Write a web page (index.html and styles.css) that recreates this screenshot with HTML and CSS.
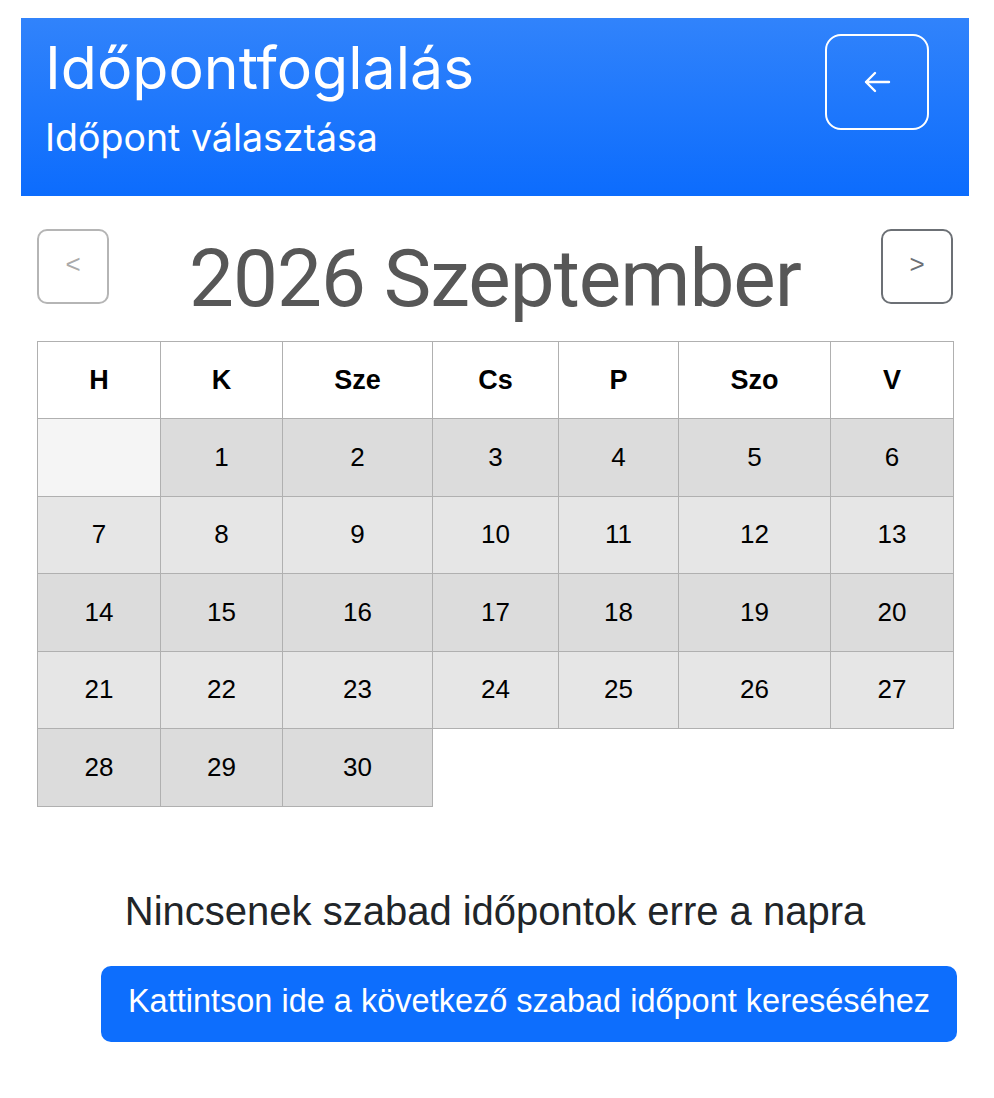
FILE: index.html
```html
<!DOCTYPE html>
<html lang="hu">
<head>
<meta charset="utf-8">
<title>Időpontfoglalás</title>
<link rel="stylesheet" href="styles.css">
</head>
<body>
<div class="page">
  <header class="top">
    <div class="titles">
      <h1 class="title">Időpontfoglalás</h1>
      <div class="subtitle">Időpont választása</div>
    </div>
    <button class="back" aria-label="Vissza">
      <svg width="30" height="24" viewBox="0 0 30 24" fill="none" stroke="#fff" stroke-width="2.4" stroke-linecap="round" stroke-linejoin="round"><path d="M27 12H4M13 3L4 12l9 9"/></svg>
    </button>
  </header>

  <section class="cal">
    <div class="nav">
      <button class="navbtn prev">&lt;</button>
      <div class="month">2026 Szeptember</div>
      <button class="navbtn next">&gt;</button>
    </div>
    <table class="grid">
      <colgroup>
        <col class="c1"><col class="c2"><col class="c3"><col class="c4"><col class="c5"><col class="c6"><col class="c7">
      </colgroup>
      <thead>
        <tr><th>H</th><th>K</th><th>Sze</th><th>Cs</th><th>P</th><th>Szo</th><th>V</th></tr>
      </thead>
      <tbody>
        <tr class="dark"><td class="empty"></td><td>1</td><td>2</td><td>3</td><td>4</td><td>5</td><td>6</td></tr>
        <tr class="light"><td>7</td><td>8</td><td>9</td><td>10</td><td>11</td><td>12</td><td>13</td></tr>
        <tr class="dark"><td>14</td><td>15</td><td>16</td><td>17</td><td>18</td><td>19</td><td>20</td></tr>
        <tr class="light"><td>21</td><td>22</td><td>23</td><td>24</td><td>25</td><td>26</td><td>27</td></tr>
        <tr class="dark last"><td>28</td><td>29</td><td>30</td><td class="none"></td><td class="none"></td><td class="none"></td><td class="none"></td></tr>
      </tbody>
    </table>
  </section>

  <p class="notice">Nincsenek szabad időpontok erre a napra</p>
  <button class="next-free">Kattintson ide a következő szabad időpont kereséséhez</button>
</div>
</body>
</html>
```

FILE: styles.css
```css
* { box-sizing: border-box; }
html, body { margin: 0; padding: 0; background: #fff; }
body { font-family: "Liberation Sans", Arial, sans-serif; color: #000; }

.page {
  width: 948px;
  margin: 18px 0 0 21px;
}

.top {
  height: 178px;
  background: linear-gradient(180deg, #3183fb 0%, #0c6cfd 100%);
  display: flex;
  justify-content: space-between;
  align-items: flex-start;
  padding: 16px 40px 0 24px;
  color: #fff;
}
.titles { padding-top: 4px; }
.title {
  margin: 0;
  font-family: Inter, "Noto Sans", sans-serif;
  font-weight: 400;
  font-size: 59px;
  line-height: 60px;
}
.subtitle {
  font-family: Inter, "Noto Sans", sans-serif;
  font-size: 37.5px;
  line-height: 44px;
  margin-top: 18px;
}
.back {
  width: 104px;
  height: 96px;
  border: 2px solid #fff;
  border-radius: 16px;
  background: transparent;
  display: flex;
  align-items: center;
  justify-content: center;
  padding: 0;
}

.cal { padding: 33px 16px 0 16px; }
.nav {
  display: flex;
  justify-content: space-between;
  align-items: flex-start;
  height: 75px;
}
.navbtn {
  width: 72px;
  height: 75px;
  border-radius: 10px;
  background: #fff;
  font-family: "Liberation Sans", Arial, sans-serif;
  font-size: 26px;
  padding: 0 0 4px 0;
}
.prev { border: 2px solid #b5b5b5; color: #aaaaaa; }
.next { border: 2px solid #6c7075; color: #6c7075; }
.month {
  font-family: Roboto, "Noto Sans", sans-serif;
  font-size: 80px;
  line-height: 90px;
  color: #575757;
  margin-top: 5px;
  letter-spacing: -1px;
}

.grid {
  margin-top: 37px;
  width: 916px;
  border-collapse: collapse;
  table-layout: fixed;
}
.c1 { width: 123px; }
.c2 { width: 122px; }
.c3 { width: 150px; }
.c4 { width: 126px; }
.c5 { width: 120px; }
.c6 { width: 152px; }
.c7 { width: 123px; }

.grid th, .grid td {
  border: 1.5px solid #b0b0b0;
  text-align: center;
  padding: 0;
}
.grid th {
  height: 77px;
  font-size: 27px;
  font-weight: 700;
  background: #fff;
}
.grid td {
  height: 77.5px;
  font-size: 26px;
}
.grid tr.dark td { background: #dcdcdc; }
.grid tr.light td { background: #e6e6e6; }
.grid tr.dark td.empty { background: #f5f5f5; }
.grid tr.last td.none { background: #fff; border: none; border-left: 1.5px solid #b0b0b0; }
.grid tr.last td.none + td.none { border-left: none; }

.notice {
  margin: 80px 0 0 0;
  text-align: center;
  font-family: "Liberation Sans", Arial, sans-serif;
  font-size: 40px;
  line-height: 48px;
  color: #212529;
}
.next-free {
  display: block;
  margin: 31px 0 0 80px;
  width: 856px;
  height: 76px;
  border: none;
  border-radius: 10px;
  background: #0d6efd;
  color: #fff;
  font-family: "Liberation Sans", Arial, sans-serif;
  font-size: 32.5px;
  padding: 0 0 4px 0;
}
```
